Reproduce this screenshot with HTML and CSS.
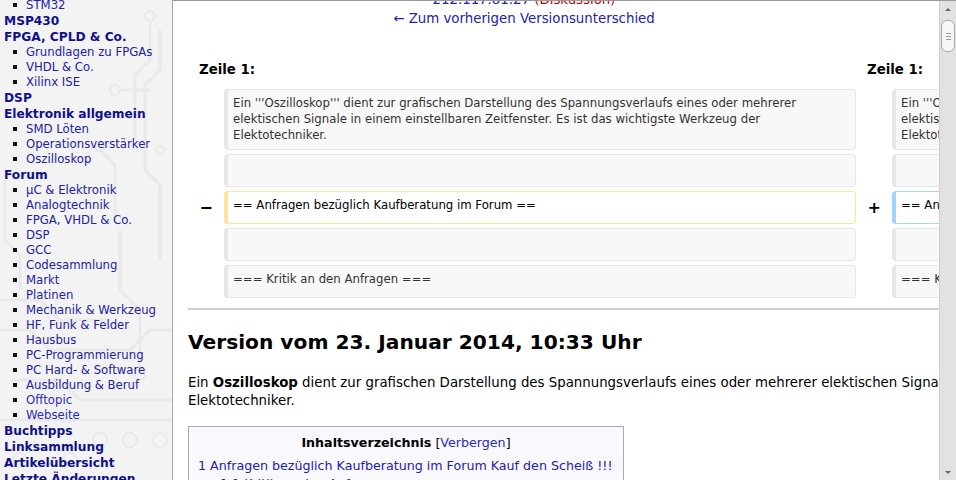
FILE: index.html
```html
<!DOCTYPE html>
<html lang="de">
<head>
    <meta charset="UTF-8">
    <title>Oszilloskop – Versionsunterschied</title>
    <link rel="stylesheet" href="styles.css">
</head>
<body>
    <div class="page">
        <nav class="sidebar">
            <svg class="circuit" width="172" height="480" viewBox="0 0 172 480">
                <g fill="none" stroke="#e9e9e9" stroke-width="3">
                    <path d="M150 20 V60 L135 75 V140"/>
                    <path d="M160 30 V70 L145 85 V170 L160 185 V260"/>
                    <path d="M120 90 H150"/>
                    <path d="M0 300 H40 L60 320 H110"/>
                    <path d="M0 330 H30 L50 350 H130 L150 330 H172"/>
                    <path d="M10 380 H60 L80 400 H172"/>
                    <path d="M0 420 H172"/>
                    <path d="M120 230 V290 L140 310 V370"/>
                    <path d="M100 150 L115 165 V220"/>
                    <path d="M5 180 V240 L20 255 V290"/>
                </g>
                <g fill="none" stroke="#e9e9e9" stroke-width="2">
                    <circle cx="150" cy="16" r="5"/>
                    <circle cx="115" cy="90" r="5"/>
                    <circle cx="100" cy="146" r="5"/>
                    <circle cx="140" cy="375" r="5"/>
                    <circle cx="100" cy="440" r="7"/>
                    <circle cx="130" cy="440" r="7"/>
                    <circle cx="160" cy="440" r="7"/>
                    <circle cx="20" cy="460" r="7"/>
                    <circle cx="70" cy="460" r="7"/>
                    <circle cx="160" cy="150" r="4"/>
                </g>
            </svg>
            <ul class="nav">
                <li><ul><li><a href="#">STM32</a></li></ul></li>
                <li><a href="#">MSP430</a></li>
                <li><a href="#">FPGA, CPLD &amp; Co.</a>
                    <ul>
                        <li><a href="#">Grundlagen zu FPGAs</a></li>
                        <li><a href="#">VHDL &amp; Co.</a></li>
                        <li><a href="#">Xilinx ISE</a></li>
                    </ul>
                </li>
                <li><a href="#">DSP</a></li>
                <li><a href="#">Elektronik allgemein</a>
                    <ul>
                        <li><a href="#">SMD Löten</a></li>
                        <li><a href="#">Operationsverstärker</a></li>
                        <li><a href="#">Oszilloskop</a></li>
                    </ul>
                </li>
                <li><a href="#">Forum</a>
                    <ul>
                        <li><a href="#">µC &amp; Elektronik</a></li>
                        <li><a href="#">Analogtechnik</a></li>
                        <li><a href="#">FPGA, VHDL &amp; Co.</a></li>
                        <li><a href="#">DSP</a></li>
                        <li><a href="#">GCC</a></li>
                        <li><a href="#">Codesammlung</a></li>
                        <li><a href="#">Markt</a></li>
                        <li><a href="#">Platinen</a></li>
                        <li><a href="#">Mechanik &amp; Werkzeug</a></li>
                        <li><a href="#">HF, Funk &amp; Felder</a></li>
                        <li><a href="#">Hausbus</a></li>
                        <li><a href="#">PC-Programmierung</a></li>
                        <li><a href="#">PC Hard- &amp; Software</a></li>
                        <li><a href="#">Ausbildung &amp; Beruf</a></li>
                        <li><a href="#" class="new">Offtopic</a></li>
                        <li><a href="#" class="new">Webseite</a></li>
                    </ul>
                </li>
                <li><a href="#">Buchtipps</a></li>
                <li><a href="#">Linksammlung</a></li>
                <li><a href="#">Artikelübersicht</a></li>
                <li><a href="#">Letzte Änderungen</a></li>
            </ul>
        </nav>

        <div class="frame">
            <div class="viewport">
                <div class="content">
                    <table class="diff">
                        <colgroup>
                            <col class="diff-marker-col">
                            <col class="diff-content-col">
                            <col class="diff-marker-col">
                            <col class="diff-content-col">
                        </colgroup>
                        <tr>
                            <td colspan="2" class="diff-otitle">
                                <div><a href="#">212.117.81.27</a> <span class="redlink">(<a href="#">Diskussion</a>)</span></div>
                                <div class="prev"><a href="#">← Zum vorherigen Versionsunterschied</a></div>
                            </td>
                            <td colspan="2" class="diff-ntitle"></td>
                        </tr>
                        <tr>
                            <td colspan="2" class="diff-lineno">Zeile 1:</td>
                            <td colspan="2" class="diff-lineno">Zeile 1:</td>
                        </tr>
                        <tr>
                            <td class="diff-marker">&nbsp;</td>
                            <td class="diff-context"><div>Ein '''Oszilloskop''' dient zur grafischen Darstellung des Spannungsverlaufs eines oder mehrerer elektischen Signale in einem einstellbaren Zeitfenster. Es ist das wichtigste Werkzeug der Elektotechniker.</div></td>
                            <td class="diff-marker">&nbsp;</td>
                            <td class="diff-context"><div>Ein '''Oszilloskop''' dient zur grafischen Darstellung des Spannungsverlaufs eines oder mehrerer elektischen Signale in einem einstellbaren Zeitfenster. Es ist das wichtigste Werkzeug der Elektotechniker.</div></td>
                        </tr>
                        <tr>
                            <td class="diff-marker">&nbsp;</td>
                            <td class="diff-context"><div>&nbsp;</div></td>
                            <td class="diff-marker">&nbsp;</td>
                            <td class="diff-context"><div>&nbsp;</div></td>
                        </tr>
                        <tr>
                            <td class="diff-marker">−</td>
                            <td class="diff-deletedline"><div>== Anfragen bezüglich Kaufberatung im Forum ==</div></td>
                            <td class="diff-marker">+</td>
                            <td class="diff-addedline"><div>== Anfragen bezüglich Kaufberatung im Forum Kauf den Scheiß !!! ==</div></td>
                        </tr>
                        <tr>
                            <td class="diff-marker">&nbsp;</td>
                            <td class="diff-context"><div>&nbsp;</div></td>
                            <td class="diff-marker">&nbsp;</td>
                            <td class="diff-context"><div>&nbsp;</div></td>
                        </tr>
                        <tr>
                            <td class="diff-marker">&nbsp;</td>
                            <td class="diff-context"><div>=== Kritik an den Anfragen ===</div></td>
                            <td class="diff-marker">&nbsp;</td>
                            <td class="diff-context"><div>=== Kritik an den Anfragen ===</div></td>
                        </tr>
                    </table>

                    <hr class="diff-hr">
                    <h2 class="diff-currentversion-title">Version vom 23. Januar 2014, 10:33 Uhr</h2>

                    <p class="intro">Ein <b>Oszilloskop</b> dient zur grafischen Darstellung des Spannungsverlaufs eines oder mehrerer elektischen Signale in einem einstellbaren Zeitfenster. Es ist das wichtigste Werkzeug der Elektotechniker.</p>

                    <div class="toc">
                        <div class="toc-title"><b>Inhaltsverzeichnis</b> <span class="toggle">[<a href="#">Verbergen</a>]</span></div>
                        <ul>
                            <li><a href="#">1 Anfragen bezüglich Kaufberatung im Forum Kauf den Scheiß !!!</a>
                                <ul>
                                    <li><a href="#">1.1 Kritik an den Anfragen</a></li>
                                </ul>
                            </li>
                        </ul>
                    </div>
                </div>
            </div>
            <div class="scrollbar">
                <div class="sb-btn"><span class="arrow-up"></span></div>
                <div class="sb-track">
                    <div class="sb-thumb"><span></span><span></span><span></span></div>
                </div>
                <div class="sb-btn"><span class="arrow-down"></span></div>
            </div>
        </div>
    </div>
</body>
</html>
```

FILE: styles.css
```css
body {
    margin: 0;
    font-family: "DejaVu Sans", Verdana, sans-serif;
    color: #000;
    background: #fff;
}

a {
    text-decoration: none;
    color: #2222aa;
}

.page {
    display: flex;
    height: 480px;
    overflow: hidden;
}

/* sidebar */

.sidebar {
    position: relative;
    width: 172px;
    flex: none;
    background: #f3f3f3;
    border-right: 1px solid #a8a8a8;
    overflow: hidden;
}

.circuit {
    position: absolute;
    left: 0;
    top: 0;
}

.nav {
    position: relative;
    list-style: none;
    margin: -2px 0 0 0;
    padding: 0 0 0 4px;
}

.nav > li {
    font-size: 12.2px;
    line-height: 16px;
}

.nav > li > a {
    font-weight: bold;
    color: #10108c;
}

.nav ul {
    list-style: none;
    margin: 0;
    padding: 0 0 0 9px;
}

.nav ul li {
    font-size: 11.7px;
    line-height: 15px;
}

.nav ul li::before {
    content: "";
    display: inline-block;
    width: 4px;
    height: 4px;
    background: #111;
    margin-right: 9px;
    vertical-align: 2px;
}

.nav ul a {
    color: #22229f;
}

.nav ul a.new {
    color: #2a2ac0;
}

/* main frame */

.frame {
    flex: 1;
    display: flex;
    border-top: 1px solid #9a9a9a;
    min-width: 0;
}

.viewport {
    flex: 1;
    overflow: hidden;
    min-width: 0;
}

.content {
    width: 1340px;
    margin-top: -14px;
    padding-left: 15px;
    font-size: 13.33px;
}

/* diff table */

.diff {
    width: 1340px;
    table-layout: fixed;
    border-spacing: 4px;
}

.diff-marker-col {
    width: 28px;
}

.diff td {
    padding: 0;
    vertical-align: top;
}

.diff-otitle {
    text-align: center;
    line-height: 18px;
}

.diff-otitle .prev {
    margin-top: 1px;
}

.redlink,
.redlink a {
    color: #ba0000;
}

.diff td.diff-lineno {
    font-weight: bold;
    line-height: 18px;
    padding: 29px 7px 6px;
}

.diff td.diff-marker {
    text-align: right;
    font-weight: bold;
    font-size: 16px;
    line-height: 23px;
    padding: 5px 7px;
}

.diff-context,
.diff-deletedline,
.diff-addedline {
    font-size: 11.73px;
    line-height: 16px;
    border-style: solid;
    border-width: 1px 1px 1px 4px;
    border-radius: 4px;
}

.diff td.diff-context,
.diff td.diff-deletedline,
.diff td.diff-addedline {
    padding: 5px 8px 6px 5px;
}

.diff-context {
    background: #f8f8f8;
    border-color: #e6e6e6;
    color: #333;
}

.diff-deletedline {
    border-color: #ffe49c;
}

.diff-addedline {
    border-color: #a3d3ff;
}

.diff td div {
    white-space: pre-wrap;
    word-wrap: break-word;
}

.diff-hr {
    border: none;
    height: 2px;
    background: #cfcfcf;
    margin: 6px 0 0 0;
}

.diff-currentversion-title {
    font-size: 20.2px;
    line-height: 24px;
    margin: 20px 0 0 0;
}

.intro {
    line-height: 18px;
    margin: 20px 0 0 0;
}

/* table of contents */

.toc {
    width: 416px;
    margin-top: 16px;
    padding: 7px 9px 8px;
    border: 1px solid #aaa;
    background: #f8f8fe;
    font-size: 12.67px;
    line-height: 18px;
}

.toc-title {
    text-align: center;
}

.toggle a {
    color: #2a2ab8;
}

.toc ul {
    list-style: none;
    margin: 5px 0 0 0;
    padding: 0;
}

.toc ul ul {
    margin: 0;
    padding-left: 22px;
}

/* fake scrollbar */

.scrollbar {
    width: 16px;
    flex: none;
    display: flex;
    flex-direction: column;
    background: #e2e2e2;
    border-left: 1px solid #cfcfcf;
}

.sb-btn {
    height: 16px;
    display: flex;
    align-items: center;
    justify-content: center;
}

.arrow-up {
    border-left: 3px solid transparent;
    border-right: 3px solid transparent;
    border-bottom: 3px solid #666;
}

.arrow-down {
    border-left: 3px solid transparent;
    border-right: 3px solid transparent;
    border-top: 3px solid #666;
}

.sb-track {
    flex: 1;
    padding-top: 3px;
}

.sb-thumb {
    height: 30px;
    margin: 0 1px;
    border: 1px solid #a9a9a9;
    border-radius: 6px;
    background: #f6f6f6;
    display: flex;
    flex-direction: column;
    align-items: center;
    justify-content: center;
    gap: 2px;
}

.sb-thumb span {
    width: 5px;
    height: 1px;
    background: #9a9a9a;
}
```
